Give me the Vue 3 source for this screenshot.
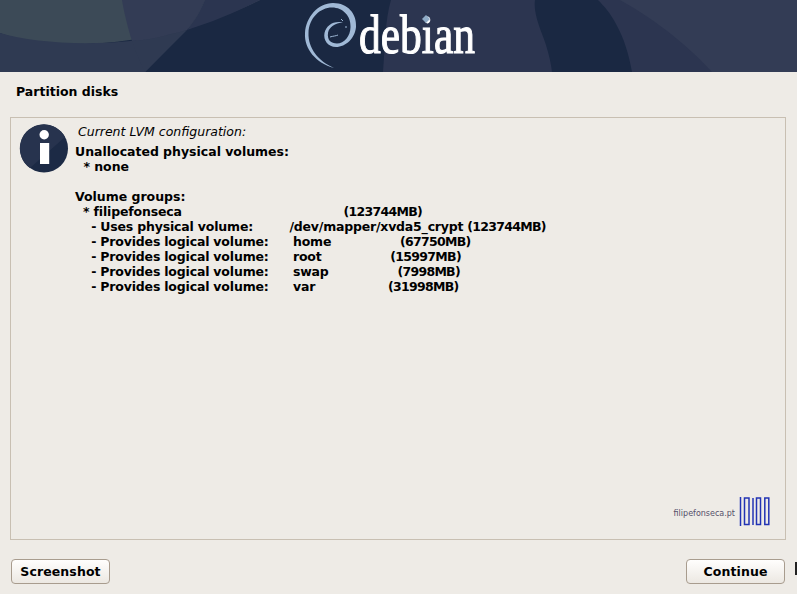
<script setup>
const pad = (n) => ' '.repeat(n)
const provides = '    - Provides logical volume:' + pad(6)
const rows = [
  { label: 'Unallocated physical volumes:', plain: true },
  { label: '  * none', plain: true },
  { label: '', plain: true },
  { label: 'Volume groups:', plain: true },
  { label: '  * filipefonseca' + pad(40), size: '(123744MB)' },
  { label: '    - Uses physical volume:' + pad(9), path: '/dev/mapper/xvda5_crypt ', size: '(123744MB)' },
  { label: provides + 'home' + pad(17), size: '(67750MB)' },
  { label: provides + 'root' + pad(17), size: '(15997MB)' },
  { label: provides + 'swap' + pad(17), size: '(7998MB)' },
  { label: provides + 'var' + pad(18), size: '(31998MB)' }
]
</script>

<template>
  <div class="page">
    <header class="banner">
      <svg class="banner-art" width="797" height="72" viewBox="0 0 797 72">
        <rect width="797" height="72" fill="#1a2842" />
        <path d="M0 0H260C225 17 187 30 160 35C120 43 75 47 40 42C25 40 10 37 0 33Z" fill="#3c4a57" />
        <path d="M0 33C30 42 80 46 130 41C150 39 170 34 187 29L145 72H0Z" fill="#2f3a52" />
        <path d="M122 0H205C200 12 195 20 187 30C165 36 150 40 132 41C127 25 124 12 122 0Z" fill="#333c55" />
        <path d="M205 0H260C235 13 212 22 187 30C195 20 200 12 205 0Z" fill="#2b3550" />
        <path d="M132 41C150 40 165 36 187 30L145 72C139 60 135 50 132 41Z" fill="#2f3a52" />
        <path d="M391 0H535C533 14 541 30 546 45C549 55 551 63 552 72H383C385 45 385 20 391 0Z" fill="#2c3550" />
        <path d="M598 0H797V72H632C629 55 624 38 616 24C611 14 604 6 598 0Z" fill="#2c3550" />
        <path d="M620 0H797V72H712C692 50 660 22 620 0Z" fill="#333c55" />
        <path d="M334 68C316 63 304 49 305 33C306 17 318 3 333 3C348 3 357 14 356 27C355 38 346 47 336 47C328 47 323 40 324.500 33C326 26 333 20.500 343 22.500C335 23 329 27 328 33C327 40 331 43.500 337 43.500C344 43.500 350.500 36 350.500 27C351 16 343 7.500 332 7.500C320 7.500 309 18 308.500 33C308 48 318 61 334 68Z" fill="#a0b9d6" />
        <path d="M330 37C333 36 336 36 338 35M346 26V28M341 19L343 21" fill="none" stroke="#9db7d4" stroke-width="1" />
        <text x="359" y="53" class="wordmark" textLength="116" lengthAdjust="spacingAndGlyphs">debian</text>
        <path d="M426 15L430 19L426 23L422 19Z" fill="#8fabc6" />
      </svg>
    </header>

    <h1 class="title">Partition disks</h1>

    <section class="panel">
      <svg class="info" width="50" height="50" viewBox="0 0 50 50">
        <circle cx="25" cy="24.500" r="24" fill="#1c2a45" />
        <path d="M2 17A24 24 0 0 1 46 13L11 44A24 24 0 0 1 2 17Z" fill="#27334e" />
        <circle cx="25.200" cy="10.800" r="4.700" fill="#fff" />
        <rect x="21" y="19" width="9.200" height="21" fill="#fff" />
      </svg>
      <div class="message">
        <p class="lead">Current LVM configuration:</p>
        <div class="listing">
          <div v-for="(row, i) in rows" :key="i" class="row" :class="{ plain: row.plain }">{{ row.label }}<span v-if="row.path" class="path">{{ row.path }}</span><span v-if="row.size" class="size">{{ row.size }}</span></div>
        </div>
      </div>
      <div class="brand">
        <span class="brand-name">filipefonseca.pt</span>
        <svg width="32" height="31" viewBox="0 0 32 31" fill="none" stroke="#2233b4" stroke-width="1.500">
          <path d="M1.500 1V30" />
          <rect x="5.500" y="2" width="4.500" height="26.500" />
          <path d="M14 2V29" />
          <rect x="17.500" y="2" width="4" height="26.500" />
          <rect x="25.800" y="2" width="4" height="26.500" />
        </svg>
      </div>
    </section>

    <footer class="actions">
      <button class="btn">Screenshot</button>
      <button class="btn">Continue</button>
    </footer>
    <span class="cursor"></span>
  </div>
</template>

<style scoped>
.page {
  position: relative;
  width: 797px;
  height: 594px;
  overflow: hidden;
  background: #eeebe6;
  color: #000;
  font-family: "DejaVu Sans", sans-serif;
  font-size: 12.5px;
  font-weight: 700;
  display: flex;
  flex-direction: column;
}
.banner {
  height: 72px;
  flex: none;
}
.banner-art {
  display: block;
}
.wordmark {
  font-family: "Liberation Serif", serif;
  font-size: 54px;
  font-weight: 400;
  fill: #fff;
  stroke: #fff;
  stroke-width: 1.100px;
}
.title {
  margin: 12px 0 0 16px;
  font-size: 12.500px;
  line-height: 16px;
  font-weight: 700;
  height: 33px;
  flex: none;
}
.panel {
  position: relative;
  margin: 0 11px 0 10px;
  height: 423px;
  border: 1px solid #c8bfb2;
  box-sizing: border-box;
  display: flex;
  flex: none;
  padding: 6px 8px;
}
.info {
  flex: none;
  display: block;
}
.message {
  margin-left: 6px;
}
.lead {
  margin: 0 0 5px 3px;
  font-weight: 400;
  font-style: italic;
  font-size: 12.500px;
  line-height: 15px;
}
.listing {
  line-height: 15px;
  word-spacing: -0.150px;
}
.row {
  white-space: pre;
  height: 15px;
  letter-spacing: -0.160px;
}
.row.plain {
  letter-spacing: 0;
}
.path {
  letter-spacing: -0.200px;
}
.size {
  letter-spacing: -0.700px;
}
.brand {
  position: absolute;
  right: 14px;
  bottom: 12px;
  display: flex;
  align-items: center;
  gap: 4px;
}
.brand-name {
  font-size: 8px;
  font-weight: 400;
  color: #55506a;
  margin-top: 3px;
}
.brand svg {
  display: block;
}
.actions {
  display: flex;
  justify-content: space-between;
  padding: 19px 12px 0 11px;
}
.btn {
  width: 99px;
  height: 25px;
  padding: 0;
  border: 1px solid #a89c8e;
  border-radius: 4px;
  background: linear-gradient(#fffefd, #ece8e2);
  color: #000;
  font: inherit;
  letter-spacing: 0.100px;
}
.cursor {
  position: absolute;
  left: 795px;
  top: 562px;
  width: 2px;
  height: 13px;
  background: #222;
}
</style>
